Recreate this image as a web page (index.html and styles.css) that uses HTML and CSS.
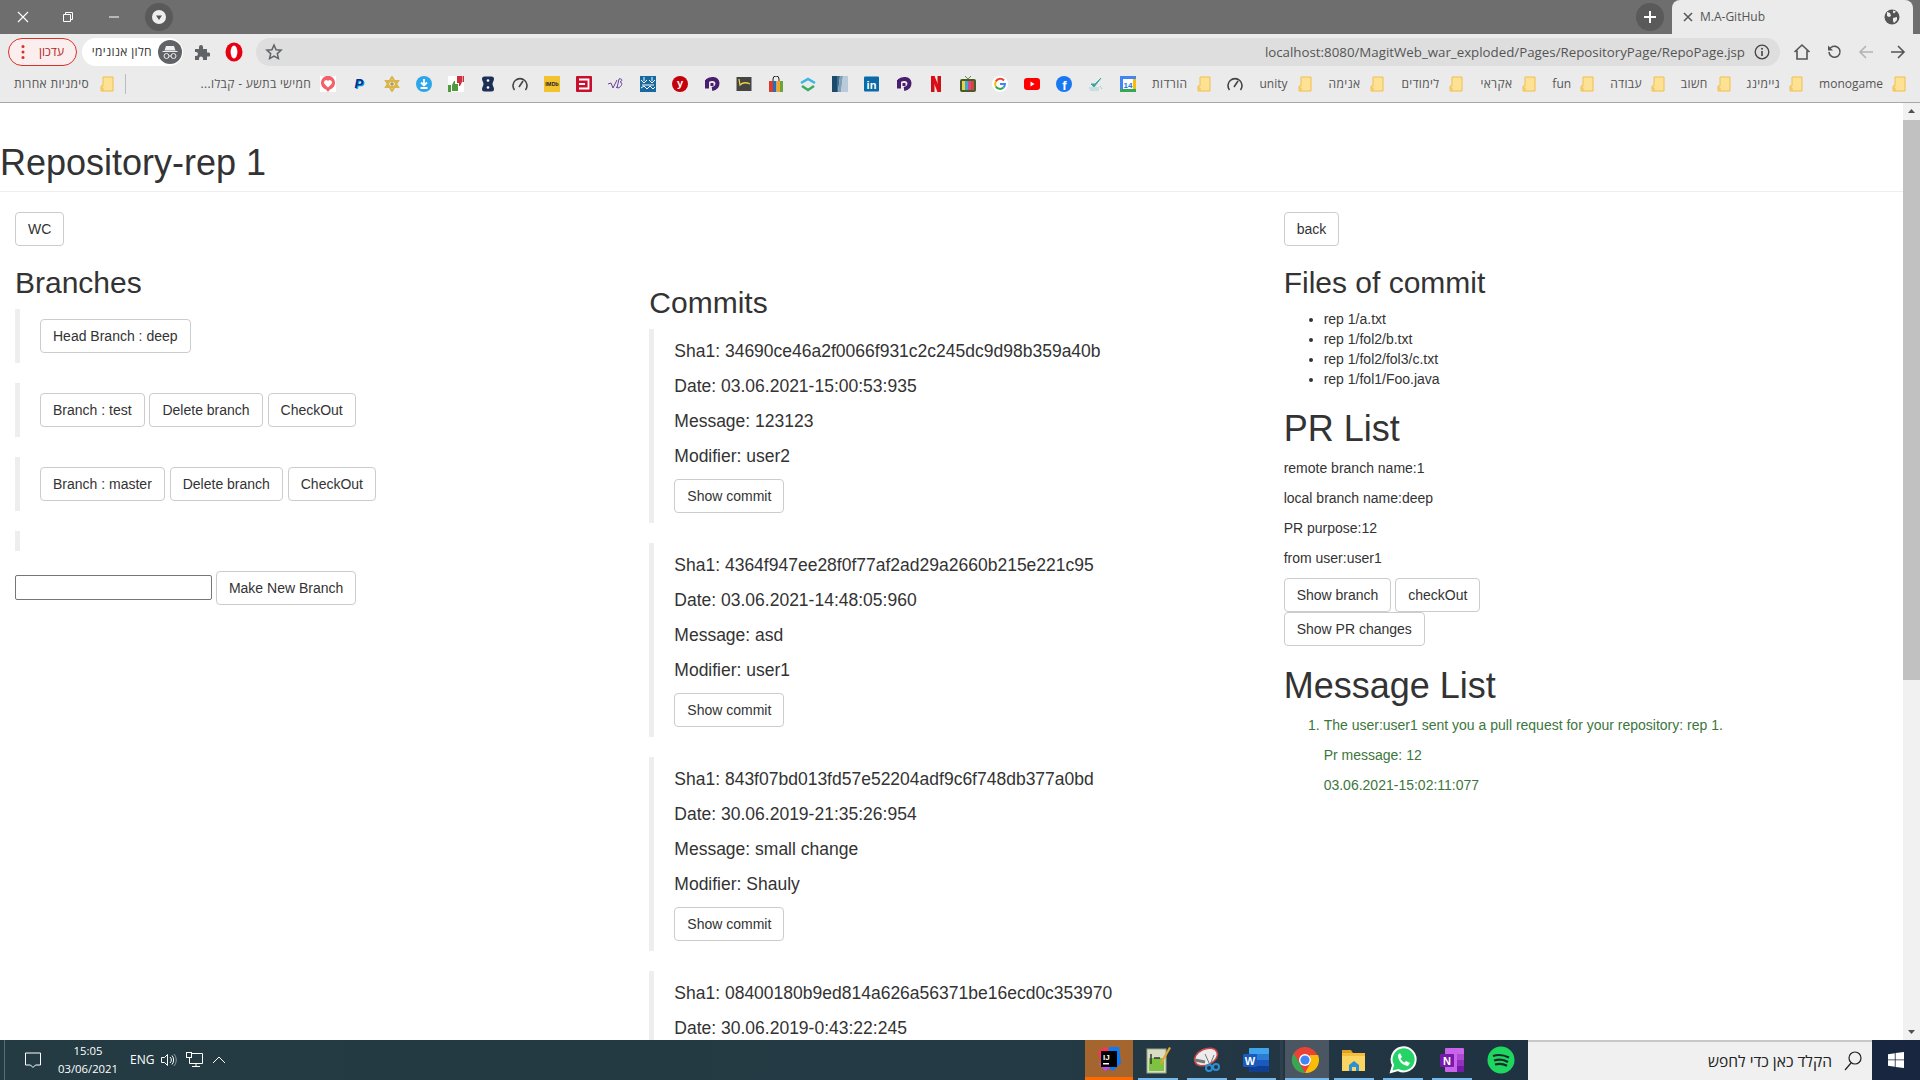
FILE: index.html
```html
<!DOCTYPE html>
<html lang="en">
<head>
    <meta charset="UTF-8">
    <meta name="viewport" content="width=device-width, initial-scale=1.0">
    <title>M.A-GitHub</title>
    <link rel="stylesheet" href="styles.css">
</head>
<body>

<svg class="defs" width="0" height="0">
    <symbol id="folder" viewBox="0 0 14 16">
        <path d="M3 1h10v14H1v-5h2z" fill="#fde293" stroke="#f2bd4e"/>
        <path d="M1 12h2v3" fill="none" stroke="#f2bd4e"/>
    </symbol>
    <symbol id="gauge" viewBox="0 0 16 16">
        <path d="M2.500 14a7 7 0 1 1 11 0" fill="none" stroke="#444" stroke-width="1.600"/>
        <path d="M7 11l4-6" stroke="#444" stroke-width="1.600"/>
    </symbol>
    <symbol id="blob" viewBox="0 0 16 16">
        <path d="M3 4v8.500M3 5c3-3 10-3 10.500 2 0 3-2 5.500-5.500 6" fill="none" stroke="#4a1e6e" stroke-width="4"/>
        <path d="M8 7v3" stroke="#4a1e6e" stroke-width="3"/>
    </symbol>
</svg>

<div class="tabbar">
    <div class="win-btn">
        <svg width="14" height="14" viewBox="0 0 14 14"><path d="M2 2l10 10M12 2L2 12" stroke="#fff" stroke-width="1.100"/></svg>
    </div>
    <div class="win-btn">
        <svg width="12" height="12" viewBox="0 0 12 12"><path d="M1.500 3.500h7v7h-7zM3.500 3.500v-2h7v7h-2" fill="none" stroke="#fff"/></svg>
    </div>
    <div class="win-btn">
        <svg width="12" height="12" viewBox="0 0 12 12"><path d="M1 6h10" stroke="#fff"/></svg>
    </div>
    <div class="tab-search">
        <svg width="14" height="14" viewBox="0 0 14 14"><circle cx="7" cy="7" r="7" fill="#eee"/><path d="M4 5.500h6L7 10z" fill="#555"/></svg>
    </div>
    <div class="tabbar-space"></div>
    <div class="new-tab">
        <svg width="14" height="14" viewBox="0 0 14 14"><path d="M7 1v12M1 7h12" stroke="#fff" stroke-width="2"/></svg>
    </div>
    <div class="tab">
        <svg width="10" height="10" viewBox="0 0 10 10"><path d="M1 1l8 8M9 1L1 9" stroke="#555" stroke-width="1.500"/></svg>
        <span class="tab-title">M.A-GitHub</span>
        <svg class="tab-globe" width="16" height="16" viewBox="0 0 16 16"><circle cx="8" cy="8" r="7.500" fill="#555"/><path d="M3 3l3 1 1 3-2 1-2-1zM9 9l4-1 0 3-3 3-1-2zM9 1.500l3 1-2 2-1-1z" fill="#eee"/></svg>
    </div>
</div>

<div class="toolbar">
    <div class="update-btn">
        <svg width="4" height="16" viewBox="0 0 4 16"><circle cx="2" cy="2.500" r="1.500" fill="#d93025"/><circle cx="2" cy="8" r="1.500" fill="#d93025"/><circle cx="2" cy="13.500" r="1.500" fill="#d93025"/></svg>
        <span>עדכון</span>
    </div>
    <div class="incognito">
        <span class="he">חלון אנונימי</span>
        <svg width="24" height="24" viewBox="0 0 24 24"><circle cx="12" cy="12" r="12" fill="#5f6368"/><path d="M8 6h8l1.500 4.500h-11zM4.500 11h15v1h-15z" fill="#eee"/><circle cx="8.500" cy="16" r="2.500" fill="none" stroke="#eee"/><circle cx="15.500" cy="16" r="2.500" fill="none" stroke="#eee"/><path d="M11 16h2" stroke="#eee"/></svg>
    </div>
    <div class="tool-btn">
        <svg width="16" height="16" viewBox="0 0 16 16"><path d="M1 5h4V3a2 2 0 0 1 4 0v2h4v3.500h1.500a2 2 0 0 1 0 4H13V16H9v-1.500a2 2 0 0 0-4 0V16H1v-4h1a2 2 0 0 0 0-4H1z" fill="#5f6368"/></svg>
    </div>
    <div class="tool-btn">
        <svg width="18" height="20" viewBox="0 0 18 20"><ellipse cx="9" cy="10" rx="8.500" ry="9.500" fill="#e60012"/><ellipse cx="9" cy="10" rx="3.400" ry="6.500" fill="#fff"/></svg>
    </div>
    <div class="omnibox">
        <svg class="omni-star" width="18" height="18" viewBox="0 0 18 18"><path d="M9 2l2.100 4.700 5 .5-3.800 3.400 1.100 5L9 13l-4.400 2.600 1.100-5L1.900 7.200l5-.5z" fill="none" stroke="#5f6368" stroke-width="1.500"/></svg>
        <span class="omni-url">localhost:8080/MagitWeb_war_exploded/Pages/RepositoryPage/RepoPage.jsp</span>
        <svg class="omni-info" width="16" height="16" viewBox="0 0 16 16"><circle cx="8" cy="8" r="6.800" fill="none" stroke="#444" stroke-width="1.300"/><path d="M8 7v5" stroke="#444" stroke-width="1.600"/><circle cx="8" cy="4.800" r="1" fill="#444"/></svg>
    </div>
    <div class="tool-btn tool-first">
        <svg width="18" height="18" viewBox="0 0 18 18"><path d="M1.500 9L9 2l7.500 7M4 7.500V16h10V7.500" fill="none" stroke="#555" stroke-width="1.600"/></svg>
    </div>
    <div class="tool-btn">
        <svg width="16" height="16" viewBox="0 0 16 16"><path d="M3 8a5.500 5.500 0 1 0 2-4.500L2.500 5.500" fill="none" stroke="#555" stroke-width="1.600"/><path d="M2 1.500v5h5z" fill="#555"/></svg>
    </div>
    <div class="tool-btn">
        <svg width="16" height="16" viewBox="0 0 16 16"><path d="M15 8H2M8 2L2 8l6 6" fill="none" stroke="#b4b4b4" stroke-width="1.600"/></svg>
    </div>
    <div class="tool-btn">
        <svg width="16" height="16" viewBox="0 0 16 16"><path d="M1 8h13M8 2l6 6-6 6" fill="none" stroke="#555" stroke-width="1.600"/></svg>
    </div>
</div>

<div class="bookmarks">
    <div class="bm-group bm-other">
        <span class="bm he">סימניות אחרות <svg class="bm-folder"><use href="#folder"/></svg></span>
        <span class="bm-sep"></span>
    </div>
    <div class="bm-group">
        <span class="bm he bm-title" dir="rtl">חמישי בתשע - קבלו...</span>

        <svg class="fav" viewBox="0 0 16 16"><rect width="16" height="16" fill="#fff"/><path d="M8 16l-2-2.500A7 7 0 1 1 10 13.500z" fill="#f4606a"/><path d="M8 11.500L4.500 8a2.300 2.300 0 0 1 3.500-3 2.300 2.300 0 0 1 3.500 3z" fill="#fff"/></svg>
        <svg class="fav" viewBox="0 0 16 16"><text x="3.500" y="13" class="ico-text" font-size="13" font-style="italic" fill="#009cde">P</text><text x="2.500" y="12" class="ico-text" font-size="13" font-style="italic" fill="#003087">P</text></svg>
        <svg class="fav" viewBox="0 0 16 16"><path d="M8 1l6 10H2zM8 15L2 5h12z" fill="none" stroke="#d8b64c" stroke-width="2"/><circle cx="8" cy="8" r="1.800" fill="#b89a3e"/></svg>
        <svg class="fav" viewBox="0 0 16 16"><circle cx="8" cy="8" r="8" fill="#2ba6ea"/><path d="M8 3v5M5 6.500l3 3 3-3M4.500 12h7" fill="none" stroke="#fff" stroke-width="1.800"/></svg>
        <svg class="fav" viewBox="0 0 16 16"><rect width="16" height="16" fill="#fff"/><path d="M0 9h3v7H0zM4 9l2-4h1v3h3v7H4z" fill="#4f9a3d"/><path d="M9 0h5v6l-2 4h-1V7H9zM14.500 0H16v6h-1.500z" fill="#c9323c"/></svg>
        <svg class="fav" viewBox="0 0 16 16"><path d="M2 3a2.500 2.500 0 0 1 2.500-2.500h7A2.500 2.500 0 0 1 14 3c0 2-1.500 3-1.500 5s1.500 3 1.500 5a2.500 2.500 0 0 1-2.500 2.500h-7A2.500 2.500 0 0 1 2 13c0-2 1.500-3 1.500-5S2 5 2 3z" fill="#1b2f55"/><circle cx="8" cy="4.500" r="1.300" fill="#fff"/><circle cx="8" cy="11.500" r="1.300" fill="#fff"/></svg>
        <svg class="fav"><use href="#gauge"/></svg>
        <svg class="fav" viewBox="0 0 16 16"><rect width="16" height="16" fill="#f3c22f"/><text x="8" y="10" class="ico-text" font-size="5.500" text-anchor="middle" fill="#222">IMDb</text></svg>
        <svg class="fav" viewBox="0 0 16 16"><rect width="16" height="16" rx="1" fill="#c8102e"/><path d="M3 3.500h9.500v9H3M3 8h6" fill="none" stroke="#fff" stroke-width="1.800"/></svg>
        <svg class="fav" viewBox="0 0 16 16"><path d="M0 8l3-1 2 5 4-8M9 12l2-9c3-1 4 2 1 3 3 0 2 5-2 6l-2-1" fill="none" stroke="#6b3f9e"/></svg>
        <svg class="fav" viewBox="0 0 16 16"><rect width="16" height="16" fill="#17699f"/><path d="M1 4l3 3 3-3M9 4l3 3 3-3M2 9h12M1 12l3-2 3 3 3-3 3 3 2-2M4 1v4M12 1v4" fill="none" stroke="#fff"/></svg>
        <svg class="fav" viewBox="0 0 16 16"><circle cx="8" cy="8" r="8" fill="#c4000b"/><text x="8" y="11" class="ico-text" font-size="11" text-anchor="middle" fill="#fff">y</text></svg>
        <svg class="fav"><use href="#blob"/></svg>
        <svg class="fav" viewBox="0 0 16 16"><rect x="0.500" y="1" width="15" height="14" fill="#444"/><path d="M3 3l1 6c3-3 6-3 10-1" fill="none" stroke="#f0d23c" stroke-width="1.300"/></svg>
        <svg class="fav" viewBox="0 0 16 16"><path d="M5 6V3a3 3 0 0 1 6 0v3" fill="none" stroke="#222"/><rect x="1" y="5" width="4" height="11" fill="#e03a2b"/><rect x="5" y="5" width="3.500" height="11" fill="#1f6fc9"/><rect x="8.500" y="5" width="3.500" height="11" fill="#f5a623"/><rect x="12" y="5" width="3" height="11" fill="#6aa43c"/></svg>
        <svg class="fav" viewBox="0 0 16 16"><path d="M1 7l7-4 7 4" fill="none" stroke="#3cb5e0" stroke-width="2.500"/><path d="M2 10l6 4 6-4" fill="none" stroke="#37ad62" stroke-width="2.500"/></svg>
        <svg class="fav" viewBox="0 0 16 16"><rect width="5" height="16" fill="#1d4a6b"/><path d="M5 0h3L6 16H5z" fill="#3d6f92"/><path d="M8 0h3L9 16H6z" fill="#7fa0b8"/><path d="M11 0h5v16H9z" fill="#b9cbd8"/></svg>
        <svg class="fav" viewBox="0 0 16 16"><rect y="0.500" width="15" height="15" rx="1" fill="#0a6ba8"/><text x="7.500" y="12.500" class="ico-text" font-size="11" text-anchor="middle" fill="#fff">in</text></svg>
        <svg class="fav"><use href="#blob"/></svg>
        <svg class="fav" viewBox="0 0 16 16"><rect x="3" width="3.500" height="16" fill="#c9111b"/><rect x="9.500" width="3.500" height="16" fill="#c9111b"/><path d="M3 0h3.500L13 16H9.500z" fill="#e50914"/></svg>
        <svg class="fav" viewBox="0 0 16 16"><path d="M5 0l3 3 3-3" fill="none" stroke="#6d8a3a"/><rect y="3" width="16" height="13" rx="2" fill="#4a5a2a"/><rect x="2" y="5" width="3" height="9" fill="#e8d24a"/><rect x="5" y="5" width="3" height="9" fill="#3fa9c9"/><rect x="8" y="5" width="3" height="9" fill="#d14a8a"/><rect x="11" y="5" width="3" height="9" fill="#c94a3a"/></svg>
        <svg class="fav" viewBox="0 0 16 16"><circle cx="8" cy="8" r="8" fill="#fff"/><path d="M12 4.500A5 5 0 0 0 3.800 5.500" fill="none" stroke="#ea4335" stroke-width="2"/><path d="M3.800 5.500a5 5 0 0 0 0 5" fill="none" stroke="#fbbc05" stroke-width="2"/><path d="M3.800 10.500A5 5 0 0 0 11.500 11.500" fill="none" stroke="#34a853" stroke-width="2"/><path d="M11.500 11.500A5 5 0 0 0 13 8H8" fill="none" stroke="#4285f4" stroke-width="2"/></svg>
        <svg class="fav" viewBox="0 0 16 16"><rect y="2" width="16" height="12" rx="3" fill="#f00"/><path d="M6.500 5.500l4 2.500-4 2.500z" fill="#fff"/></svg>
        <svg class="fav" viewBox="0 0 16 16"><circle cx="8" cy="8" r="8" fill="#1877f2"/><text x="8.500" y="14" class="ico-text" font-size="13" text-anchor="middle" fill="#fff">f</text></svg>
        <svg class="fav" viewBox="0 0 16 16"><path d="M3 8l3 3 7-9-6 6z" fill="#3ba6a0" stroke="#3ba6a0"/><path d="M1 12h10M2 14h9M12 10l2 3" stroke="#a5d3d0"/></svg>
        <svg class="fav" viewBox="0 0 16 16"><rect width="16" height="16" rx="1" fill="#fff"/><path d="M0 0h16v3H0z" fill="#4285f4"/><path d="M0 0h3v13H0z" fill="#4285f4"/><path d="M13 3h3v10h-3z" fill="#fbbc05"/><path d="M0 13h16v3H0z" fill="#34a853"/><text x="8" y="11.500" class="ico-text" font-size="8" text-anchor="middle" fill="#1a73e8">14</text></svg>

        <span class="bm he">הורדות <svg class="bm-folder"><use href="#folder"/></svg></span>
        <svg class="fav"><use href="#gauge"/></svg>
        <span class="bm bm-loose">unity <svg class="bm-folder"><use href="#folder"/></svg></span>
        <span class="bm he bm-loose">אנימה <svg class="bm-folder"><use href="#folder"/></svg></span>
        <span class="bm he bm-loose">לימודים <svg class="bm-folder"><use href="#folder"/></svg></span>
        <span class="bm he bm-loose">אקראי <svg class="bm-folder"><use href="#folder"/></svg></span>
        <span class="bm">fun <svg class="bm-folder"><use href="#folder"/></svg></span>
        <span class="bm he">עבודה <svg class="bm-folder"><use href="#folder"/></svg></span>
        <span class="bm he">חשוב <svg class="bm-folder"><use href="#folder"/></svg></span>
        <span class="bm he">גיימינג <svg class="bm-folder"><use href="#folder"/></svg></span>
        <span class="bm">monogame <svg class="bm-folder"><use href="#folder"/></svg></span>
    </div>
</div>

<div class="viewport">
    <main class="page">
        <div class="page-header">
            <h1>Repository-rep 1</h1>
        </div>
        <div class="columns">
            <section class="col">
                <button class="btn">WC</button>
                <h2>Branches</h2>
                <blockquote><button class="btn">Head Branch : deep</button></blockquote>
                <blockquote>
                    <button class="btn">Branch : test</button>
                    <button class="btn">Delete branch</button>
                    <button class="btn">CheckOut</button>
                </blockquote>
                <blockquote>
                    <button class="btn">Branch : master</button>
                    <button class="btn">Delete branch</button>
                    <button class="btn">CheckOut</button>
                </blockquote>
                <blockquote></blockquote>
                <input type="text" class="branch-input">
                <button class="btn">Make New Branch</button>
            </section>

            <section class="col col-commits">
                <h2>Commits</h2>
                <blockquote>
                    <p>Sha1: 34690ce46a2f0066f931c2c245dc9d98b359a40b</p>
                    <p>Date: 03.06.2021-15:00:53:935</p>
                    <p>Message: 123123</p>
                    <p>Modifier: user2</p>
                    <button class="btn">Show commit</button>
                </blockquote>
                <blockquote>
                    <p>Sha1: 4364f947ee28f0f77af2ad29a2660b215e221c95</p>
                    <p>Date: 03.06.2021-14:48:05:960</p>
                    <p>Message: asd</p>
                    <p>Modifier: user1</p>
                    <button class="btn">Show commit</button>
                </blockquote>
                <blockquote>
                    <p>Sha1: 843f07bd013fd57e52204adf9c6f748db377a0bd</p>
                    <p>Date: 30.06.2019-21:35:26:954</p>
                    <p>Message: small change</p>
                    <p>Modifier: Shauly</p>
                    <button class="btn">Show commit</button>
                </blockquote>
                <blockquote class="commit-cut">
                    <p>Sha1: 08400180b9ed814a626a56371be16ecd0c353970</p>
                    <p>Date: 30.06.2019-0:43:22:245</p>
                </blockquote>
            </section>

            <section class="col">
                <button class="btn">back</button>
                <h2>Files of commit</h2>
                <ul>
                    <li>rep 1/a.txt</li>
                    <li>rep 1/fol2/b.txt</li>
                    <li>rep 1/fol2/fol3/c.txt</li>
                    <li>rep 1/fol1/Foo.java</li>
                </ul>
                <h1>PR List</h1>
                <p>remote branch name:1</p>
                <p>local branch name:deep</p>
                <p>PR purpose:12</p>
                <p>from user:user1</p>
                <div>
                    <button class="btn">Show branch</button>
                    <button class="btn">checkOut</button>
                </div>
                <div>
                    <button class="btn">Show PR changes</button>
                </div>
                <h1>Message List</h1>
                <ol class="messages">
                    <li>
                        <p>The user:user1 sent you a pull request for your repository: rep 1.</p>
                        <p>Pr message: 12</p>
                        <p>03.06.2021-15:02:11:077</p>
                    </li>
                </ol>
            </section>
        </div>
    </main>
    <div class="scrollbar">
        <svg class="scroll-arrow" width="17" height="17" viewBox="0 0 17 17"><path d="M5 10l3.500-4 3.500 4z" fill="#505050"/></svg>
        <div class="scroll-thumb"></div>
        <div class="scroll-rest"></div>
        <svg class="scroll-arrow" width="17" height="17" viewBox="0 0 17 17"><path d="M5 7l3.500 4 3.500-4z" fill="#505050"/></svg>
    </div>
</div>

<footer class="taskbar">
    <div class="tray">
        <span class="tray-edge"></span>
        <svg class="tray-action" width="18" height="18" viewBox="0 0 18 18"><path d="M1.500 2h15v12h-5l-2.500 2.500L6.500 14h-5z" fill="none" stroke="#fff"/></svg>
        <div class="clock"><span>15:05</span><span>03/06/2021</span></div>
        <span class="lang">ENG</span>
        <svg width="18" height="16" viewBox="0 0 18 16"><path d="M1.500 5.500h3l3-3v11l-3-3h-3z" fill="none" stroke="#fff"/><path d="M10 5a4 4 0 0 1 0 6M12 3.500a7 7 0 0 1 0 9" fill="none" stroke="#fff"/><path d="M14 2a9 9 0 0 1 0 12" fill="none" stroke="#8a979c"/></svg>
        <svg width="18" height="16" viewBox="0 0 18 16"><path d="M3.500 1.500h13v10h-13zM10 11.500v3M6 14.500h8" fill="none" stroke="#fff"/><rect x="0.500" y="0.500" width="5" height="5" fill="#243b43" stroke="#fff"/></svg>
        <svg width="14" height="10" viewBox="0 0 14 10"><path d="M1 8l6-6 6 6" fill="none" stroke="#fff"/></svg>
    </div>
    <div class="apps">
        <div class="app app-ij">
            <svg width="28" height="28" viewBox="0 0 28 28"><path d="M3 6l8-4 4 4-8 16z" fill="#fe315d"/><path d="M14 2h10l2 16-8 8-6-4z" fill="#087cfa"/><path d="M3 18l7 8 6-4z" fill="#b74af7"/><rect x="6" y="6" width="16" height="16" fill="#000"/><text x="8" y="15" class="ico-text" font-size="8" fill="#fff">IJ</text><rect x="8" y="18" width="6" height="1.500" fill="#fff"/></svg>
        </div>
        <div class="app app-on">
            <svg width="28" height="28" viewBox="0 0 28 28"><rect x="3" y="3" width="19" height="24" fill="#d8ddc4" stroke="#9aa58a"/><rect x="5" y="12" width="15" height="13" fill="#7fc241"/><path d="M7 8v10M10 12h6" stroke="#333" stroke-width="1.500"/><path d="M25 1l-8 14-1 4 3-3 8-14z" fill="#e0a82e"/></svg>
        </div>
        <div class="app app-on">
            <svg width="30" height="28" viewBox="0 0 30 28"><ellipse cx="14" cy="11" rx="12" ry="8" transform="rotate(-25 14 11)" fill="#ececec" stroke="#c9454a" stroke-width="1.500"/><path d="M3 14l10 2" stroke="#777" stroke-width="3"/><path d="M13 8l5 11M22 9l-4 10" stroke="#777"/><circle cx="17" cy="22" r="3" fill="none" stroke="#2b8fd6" stroke-width="2"/><circle cx="24" cy="21" r="3" fill="none" stroke="#2b8fd6" stroke-width="2"/></svg>
        </div>
        <div class="app app-on">
            <svg width="28" height="28" viewBox="0 0 28 28"><rect x="7" y="2" width="20" height="24" rx="1" fill="#2b7cd3"/><rect x="7" y="2" width="20" height="6" rx="1" fill="#41a5ee"/><rect x="7" y="14" width="20" height="6" fill="#185abd"/><rect x="7" y="20" width="20" height="6" rx="1" fill="#103f91"/><rect x="1" y="8" width="14" height="13" rx="1" fill="#185abd"/><text x="8" y="18.500" class="ico-text" font-size="11" text-anchor="middle" fill="#fff">W</text></svg>
        </div>
        <div class="app-divider"></div>
        <div class="app app-on app-chrome">
            <svg width="28" height="28" viewBox="0 0 28 28"><circle cx="14" cy="14" r="13" fill="#ea4335"/><path d="M14 27A13 13 0 0 1 2.700 7.500L9 18z" fill="#34a853"/><path d="M14 27L20 16l-1-7h8A13 13 0 0 1 14 27z" fill="#fbbc05"/><circle cx="14" cy="14" r="6" fill="#fff"/><circle cx="14" cy="14" r="4.600" fill="#4285f4"/></svg>
        </div>
        <div class="app app-on">
            <svg width="28" height="26" viewBox="0 0 28 26"><path d="M2 3h9l2 3h-11z" fill="#e0a020"/><rect x="2" y="6" width="23" height="18" fill="#fcd462"/><path d="M2 6h23v3H2z" fill="#f6bc3d"/><path d="M9 24v-6l5-4 5 4v6h-3v-4h-4v4z" fill="#2b8fd6"/></svg>
        </div>
        <div class="app app-on">
            <svg width="28" height="28" viewBox="0 0 28 28"><path d="M2 26l2-7A12 12 0 1 1 9 24z" fill="#25d366" stroke="#fff" stroke-width="2"/><path d="M9 9c0 6 4 10 10 11l2-3-4-2-1.500 1.500c-2-1-3-2-4-4L13 11l-2-4z" fill="#fff"/></svg>
        </div>
        <div class="app app-on">
            <svg width="28" height="28" viewBox="0 0 28 28"><rect x="7" y="2" width="19" height="24" rx="1" fill="#ca64ea"/><rect x="19" y="8" width="7" height="6" fill="#ae4bd5"/><rect x="19" y="14" width="7" height="6" fill="#9332bf"/><rect x="19" y="20" width="7" height="6" fill="#7719aa"/><rect x="2" y="8" width="14" height="13" rx="1" fill="#7719aa"/><text x="9" y="18.500" class="ico-text" font-size="11" text-anchor="middle" fill="#fff">N</text></svg>
        </div>
        <div class="app">
            <svg width="28" height="28" viewBox="0 0 28 28"><circle cx="14" cy="14" r="13.500" fill="#1ed760"/><path d="M6 10c6-2 11-1 16 1.500M7 14.500c5-1.500 10-1 14 1.500M8 18.500c4-1 8-.8 12 1.200" fill="none" stroke="#1a2a2a" stroke-width="2.200"/></svg>
        </div>
    </div>
    <div class="search">
        <span>הקלד כאן כדי לחפש</span>
        <svg width="18" height="20" viewBox="0 0 18 20"><circle cx="11" cy="7" r="6" fill="none" stroke="#222" stroke-width="1.200"/><path d="M7 12l-6 7" stroke="#222" stroke-width="1.200"/></svg>
    </div>
    <div class="start">
        <svg width="16" height="16" viewBox="0 0 16 16"><path d="M0 2.200L6.800 1.200V7.500H0zM7.600 1L16 0v7.500H7.600zM0 8.300h6.800v6.500L0 13.800zM7.600 8.300H16V16l-8.400-1.100z" fill="#fff"/></svg>
    </div>
</footer>

</body>
</html>
```
FILE: styles.css
```css
* {
    box-sizing: border-box;
}
html, body {
    height: 100%;
}
body {
    margin: 0;
    display: flex;
    flex-direction: column;
    overflow: hidden;
    font-family: "Liberation Sans", Arial, sans-serif;
    font-size: 14px;
    line-height: 1.42857143;
    color: #333;
    background-color: #fff;
}
.defs {
    position: absolute;
}
.ico-text {
    font-family: "Liberation Sans", Arial, sans-serif;
    font-weight: bold;
}
.he {
    letter-spacing: 0.35px;
}

/* browser tabs */
.tabbar {
    height: 34px;
    flex: none;
    display: flex;
    align-items: center;
    background-color: #6e6e6e;
    padding-right: 7px;
}
.win-btn {
    width: 46px;
    display: flex;
    justify-content: center;
}
.win-btn:first-child {
    width: 45px;
}
.tab-search, .new-tab {
    width: 28px;
    height: 28px;
    border-radius: 50%;
    background-color: #5a5a5a;
    display: flex;
    align-items: center;
    justify-content: center;
}
.tab-search {
    margin-left: 8px;
}
.new-tab {
    margin-right: 8px;
}
.tabbar-space {
    flex: 1;
}
.tab {
    width: 241px;
    height: 34px;
    display: flex;
    align-items: center;
    gap: 7px;
    padding: 0 13px 0 11px;
    background-color: #ebebeb;
    border-radius: 8px 8px 0 0;
}
.tab-title {
    font-family: "Open Sans", sans-serif;
    font-size: 12px;
    color: #555;
}
.tab-globe {
    margin-left: auto;
}

/* address bar */
.toolbar {
    height: 32px;
    flex: none;
    display: flex;
    align-items: flex-end;
    padding: 0 6px 0 8px;
    background-color: #ebebeb;
}
.update-btn {
    width: 69px;
    height: 28px;
    display: flex;
    align-items: center;
    justify-content: space-between;
    padding: 0 12px;
    border: 1px solid #d93025;
    border-radius: 14px;
    background-color: #fbeeee;
    color: #b3261e;
    font-family: "Open Sans", "Liberation Sans", sans-serif;
    font-size: 12px;
}
.incognito {
    width: 101px;
    height: 28px;
    margin-left: 5px;
    display: flex;
    align-items: center;
    justify-content: flex-end;
    gap: 6px;
    padding-right: 1px;
    border-radius: 14px;
    background-color: #fff;
    color: #333;
    font-family: "Open Sans", "Liberation Sans", sans-serif;
    font-size: 12px;
    white-space: nowrap;
}
.tool-btn {
    width: 32px;
    height: 28px;
    flex: none;
    display: flex;
    align-items: center;
    justify-content: center;
}
.tool-btn:nth-child(3) {
    margin-left: 3px;
}
.tool-first {
    margin-left: 6px;
}
.omnibox {
    flex: 1;
    height: 28px;
    margin-left: 6px;
    display: flex;
    align-items: center;
    padding: 0 10px 0 9px;
    border-radius: 14px;
    background-color: #dedede;
}
.omni-url {
    margin-left: auto;
    font-family: "Open Sans", sans-serif;
    font-size: 13.3px;
    color: #555;
    white-space: nowrap;
}
.omni-info {
    margin-left: 9px;
}

/* bookmarks */
.bookmarks {
    height: 37px;
    flex: none;
    display: flex;
    align-items: center;
    justify-content: space-between;
    padding: 0 14px;
    background-color: #ebebeb;
    border-bottom: 1px solid #a8a8a8;
}
.bm-group {
    display: flex;
    align-items: center;
    gap: 16px;
}
.bm {
    display: inline-flex;
    align-items: center;
    gap: 9px;
    font-family: "Open Sans", "Liberation Sans", sans-serif;
    font-size: 12px;
    color: #555;
    white-space: nowrap;
}
.bm-other .bm {
    gap: 11px;
}
.bm-title {
    margin-right: -7px;
}
.bm-loose {
    gap: 10px;
    margin-left: 1px;
}
.bm-folder {
    width: 14px;
    height: 16px;
}
.bm-sep {
    width: 1px;
    height: 20px;
    margin-left: -5px;
    background-color: #bbb;
}
.fav {
    width: 16px;
    height: 16px;
    flex: none;
}

/* page */
.viewport {
    flex: 1;
    min-height: 0;
    display: flex;
}
.page {
    flex: 1;
    min-width: 0;
    overflow: hidden;
}
h1, h2 {
    font-family: inherit;
    font-weight: 500;
    line-height: 1.1;
    color: #333;
    margin: 20px 0 10px;
}
h1 {
    font-size: 36px;
}
h2 {
    font-size: 30px;
}
p {
    margin: 0 0 10px;
}
.page-header {
    padding-bottom: 9px;
    margin: 0 0 20px;
    border-bottom: 1px solid #eee;
}
.page-header h1 {
    margin: 39.5px 0 0;
}
.columns {
    display: grid;
    grid-template-columns: repeat(3, 1fr);
}
.col {
    padding: 0 15px;
    min-width: 0;
}
.col h1 {
    margin-bottom: 9.5px;
}
.col-commits h2 {
    margin-top: 74px;
}
.btn {
    display: inline-block;
    padding: 6px 12px;
    font-family: inherit;
    font-size: 14px;
    line-height: 1.42857143;
    color: #333;
    background-color: #fff;
    border: 1px solid #ccc;
    border-radius: 4px;
    vertical-align: middle;
    white-space: nowrap;
}
blockquote {
    padding: 10px 20px;
    margin: 0 0 20px;
    font-size: 17.5px;
    border-left: 5px solid #eee;
}
blockquote:empty {
    height: 20px;
}
.commit-cut {
    min-height: 194px;
}
.branch-input {
    width: 197px;
    height: 25px;
    margin-bottom: 2px;
    padding: 1px 2px;
    font: inherit;
    border: 1px solid #767676;
    border-radius: 2px;
    vertical-align: middle;
}
ul, ol {
    margin: 0 0 10px;
    padding-left: 40px;
}
.messages {
    color: #3c763d;
}

/* page scrollbar */
.scrollbar {
    width: 17px;
    flex: none;
    display: flex;
    flex-direction: column;
    background-color: #f1f1f1;
}
.scroll-arrow {
    flex: none;
}
.scroll-thumb {
    height: 560px;
    background-color: #c1c1c1;
}
.scroll-rest {
    flex: 1;
}

/* windows taskbar */
.taskbar {
    height: 40px;
    flex: none;
    display: flex;
    background: linear-gradient(to right, #243b43 0%, #243a44 55%, #1b2c40 100%);
    color: #fff;
}
.tray {
    width: 1085px;
    display: flex;
    align-items: center;
    gap: 8px;
    padding-left: 4px;
}
.tray-edge {
    width: 1px;
    height: 40px;
    margin-right: 11px;
    background-color: #5b6d74;
}
.tray-action {
    margin-right: 4px;
}
.clock {
    width: 68px;
    display: flex;
    flex-direction: column;
    align-items: center;
    font-family: "Open Sans", sans-serif;
    font-size: 11.3px;
    line-height: 18px;
    white-space: nowrap;
}
.lang {
    font-family: "Open Sans", sans-serif;
    font-size: 12px;
    margin-right: -2px;
}
.apps {
    display: flex;
    width: 443px;
}
.app {
    width: 49px;
    height: 40px;
    display: flex;
    align-items: center;
    justify-content: center;
}
.app-ij {
    width: 48px;
    background-color: #a5652f;
    border-bottom: 3px solid #ff6a00;
}
.app-on {
    background: linear-gradient(#76b9ed, #76b9ed) center bottom / 40px 2px no-repeat;
}
.app-divider {
    width: 3px;
    height: 40px;
    background-color: #2f3f4d;
}
.app-chrome {
    width: 44px;
    margin-left: 2px;
    padding-right: 4px;
    background: linear-gradient(#76b9ed, #76b9ed) center bottom / 100% 2px no-repeat, #4a5763;
}
.search {
    width: 344px;
    height: 40px;
    display: flex;
    align-items: center;
    justify-content: flex-end;
    gap: 12px;
    padding-right: 10px;
    background-color: #f0f0f0;
    border-top: 2px solid #c8c8c8;
    color: #222;
    font-family: "Open Sans", "Liberation Sans", sans-serif;
    font-size: 15.6px;
}
.start {
    flex: 1;
    display: flex;
    align-items: center;
    justify-content: center;
    background-color: #18263f;
}
```
